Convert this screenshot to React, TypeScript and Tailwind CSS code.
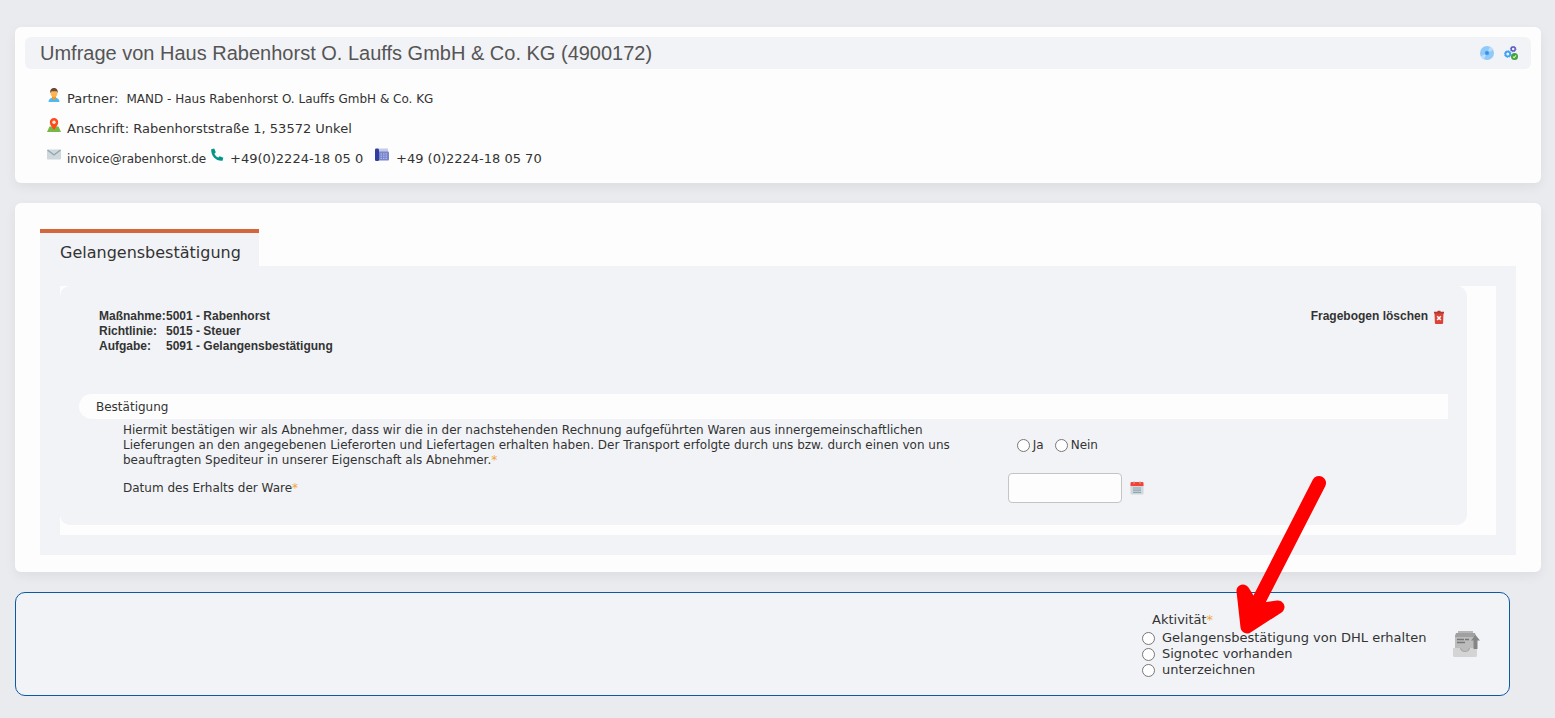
import React, { useState } from 'react';

const PersonIcon = () => (
    <svg viewBox="0 0 14 14" className="size-3.5 shrink-0">
        <path d="M1.500 14c0-3 2-4.500 5.500-4.500s5.500 1.500 5.500 4.500z" fill="#4fb8f5" />
        <path d="M5 8h4v2.500l-2 1.500-2-1.500z" fill="#f59b1c" />
        <ellipse cx="7" cy="5" rx="3.400" ry="4" fill="#ffb554" />
        <path d="M3.400 5C2.700 1.500 4.700 0 7 0s4.300 1.500 3.600 5L9.700 3.200H4.600z" fill="#6d4a35" />
    </svg>
)

const MapIcon = () => (
    <svg viewBox="0 0 14 14" className="size-3.5 shrink-0">
        <path d="M2.500 8.500h9L14 14H0z" fill="#75b843" />
        <path d="M7 12C5.500 9.500 2.800 7.500 2.800 4.300a4.200 4.200 0 0 1 8.400 0C11.200 7.500 8.500 9.500 7 12z" fill="#ff4a1c" />
        <circle cx="7" cy="4.300" r="1.700" fill="#ffe9e0" />
    </svg>
)

const MailIcon = () => (
    <svg viewBox="0 0 14 14" className="size-3.5 shrink-0">
        <rect y="1.500" width="14" height="10" rx="1" fill="#cfd8dc" />
        <path d="M0.500 2L7 7l6.500-5" fill="none" stroke="#90a4ae" strokeWidth="1.300" />
    </svg>
)

const PhoneIcon = () => (
    <svg viewBox="0 0 14 14" className="size-3.5 shrink-0">
        <path d="M1.200 1.200L4.200.5 5.800 4.300 4.400 5.700c.8 1.700 2 3 3.900 3.900l1.400-1.400L13.300 9.700l-.8 3C6 13.200.8 8 1.200 1.200z" fill="#009688" />
    </svg>
)

const FaxIcon = () => (
    <svg viewBox="0 0 14 14" className="size-3.5 shrink-0">
        <rect x="4" y="0.500" width="9" height="4" fill="#c5cae9" />
        <rect x="3" y="3.500" width="11" height="9" rx="1" fill="#7986cb" />
        <path d="M5.500 6h7M5.500 8.200h7M5.500 10.400h7" stroke="#b9c1ee" strokeDasharray="1.500 1" />
        <rect y="0.500" width="4" height="12.500" rx="1.200" fill="#303f9f" />
    </svg>
)

const DiscIcon = () => (
    <svg viewBox="0 0 14 14" className="size-3.5">
        <circle cx="7" cy="7" r="7" fill="#90caf9" />
        <path d="M7 7L.8 10.200A7 7 0 0 0 4 13.300zM7 7l6.200-3.200A7 7 0 0 0 10 .7z" fill="#bbdefb" />
        <circle cx="7" cy="7" r="2.300" fill="#4a9ff0" />
        <circle cx="7" cy="7" r="0.800" fill="#3578c8" />
    </svg>
)

const GearsIcon = () => (
    <svg viewBox="0 0 14 14" className="size-3.5">
        <circle cx="9.200" cy="3" r="2" fill="none" stroke="#5c5fc4" strokeWidth="1.500" />
        <circle cx="9.200" cy="3" r="2.800" fill="none" stroke="#5c5fc4" strokeWidth="0.800" strokeDasharray="1.200 1" />
        <circle cx="3.800" cy="8" r="2.400" fill="none" stroke="#3fa2f4" strokeWidth="1.800" />
        <circle cx="3.800" cy="8" r="3.400" fill="none" stroke="#3fa2f4" strokeWidth="0.900" strokeDasharray="1.400 1.200" />
        <circle cx="10.500" cy="10.500" r="3.500" fill="#43a047" />
        <path d="M8.900 10.600l1.200 1.100 2-2.300" fill="none" stroke="#ccff90" strokeWidth="1.100" />
    </svg>
)

const TrashIcon = () => (
    <svg viewBox="0 0 12 14" className="h-3.5 w-3">
        <path d="M1.500 3h9l-.4 10a1 1 0 0 1-1 1H2.900a1 1 0 0 1-1-1z" fill="#dc4338" />
        <path d="M1 1.800h3.200L4.800.7h2.400l.6 1.100H11v1.600H1z" fill="#b23a32" />
        <path d="M4.200 6.200l3.600 3.800M7.800 6.200L4.200 10" stroke="#fff" strokeWidth="1.500" />
    </svg>
)

const CalendarIcon = () => (
    <svg viewBox="0 0 14 14" className="size-3.5">
        <rect x="0.500" y="3" width="13" height="10.500" rx="1" fill="#cfd8dc" />
        <path d="M.5 5V2a1 1 0 0 1 1-1h11a1 1 0 0 1 1 1v3z" fill="#f44336" />
        <path d="M4 .5v2.300M10 .5v2.300" stroke="#b9a6a6" strokeWidth="1.300" />
        <path d="M3 7h8M3 9.200h8M3 11.400h8" stroke="#90a4ae" strokeWidth="1.200" />
    </svg>
)

const SubmitIcon = () => (
    <svg viewBox="0 0 28 28" className="size-7">
        <path d="M6 1h15v3H6z" fill="#b5b5b5" />
        <path d="M4 3h19l1 3v14H3V6z" fill="#a0a0a0" />
        <path d="M3 7h20v13H3z" fill="#bcbcbc" />
        <path d="M1 18h7.500c.5 2.500 2 3.500 4.500 3.500s4-1 4.500-3.500H25v7.500a1.500 1.500 0 0 1-1.500 1.500h-21A1.500 1.500 0 0 1 1 25.500z" fill="#d4d4d4" />
        <path d="M8.500 18h9c-.5 2.500-2 3.500-4.500 3.500s-4-1-4.500-3.500z" fill="#bcbcbc" />
        <path d="M8.500 18c.5 2.500 2 3.500 4.500 3.500s4-1 4.500-3.500" fill="none" stroke="#a8a8a8" strokeWidth="1.200" />
        <path d="M5 9.500h7M13 9.500h4M5 12.500h8" stroke="#777" strokeWidth="1.500" />
        <path d="M23.500 5l4.500 5.500h-2.500V19h-4v-8.500H19z" fill="#858585" />
    </svg>
)

const Arrow = () => (
    <svg viewBox="0 0 91 160" className="pointer-events-none absolute right-[182px] -top-[118px] h-40 w-[91px]" fill="none" stroke="#ff0000" strokeWidth="13" strokeLinecap="round" strokeLinejoin="round">
        <path d="M83 8L21 129" strokeWidth="14" />
        <path d="M7 116l4 36 31-20-23 3z" fill="#ff0000" />
    </svg>
)

const Star = () => <span className="text-[#f5a33c]">*</span>

const details = [
    { label: 'Maßnahme:', value: '5001 - Rabenhorst' },
    { label: 'Richtlinie:', value: '5015 - Steuer' },
    { label: 'Aufgabe:', value: '5091 - Gelangensbestätigung' },
]

const activities = ['Gelangensbestätigung von DHL erhalten', 'Signotec vorhanden', 'unterzeichnen']

const radioClass = "size-[13px] shrink-0"

const Header = () => {
    return (
        <header className="rounded-md bg-[#fdfdfd] px-2.5 pt-2.5 pb-2.5 shadow-[0_4px_12px_rgba(0,0,0,0.06)]">
            <div className="flex h-8 items-center justify-between rounded-md bg-[#f2f3f7] pr-[13px] pl-[15px]">
                <h1 className="font-['Liberation_Sans',sans-serif] text-[20px] text-[#555]">Umfrage von Haus Rabenhorst O. Lauffs GmbH &amp; Co. KG (4900172)</h1>
                <div className="flex gap-2.5">
                    <button type="button" aria-label="Datenträger"><DiscIcon /></button>
                    <button type="button" aria-label="Einstellungen"><GearsIcon /></button>
                </div>
            </div>
            <div className="mt-[15px] pl-[22px] text-[13px]">
                <div className="flex h-[30px] items-center">
                    <span className="mb-2"><PersonIcon /></span>
                    <span className="ml-1.5">Partner:</span>
                    <span className="ml-2 text-[12px]">MAND - Haus Rabenhorst O. Lauffs GmbH &amp; Co. KG</span>
                </div>
                <div className="flex h-[30px] items-center">
                    <span className="mb-2"><MapIcon /></span>
                    <span className="ml-1.5">Anschrift: Rabenhorststraße 1, 53572 Unkel</span>
                </div>
                <div className="flex h-[29px] items-center">
                    <span className="mb-2"><MailIcon /></span>
                    <a href="mailto:invoice@rabenhorst.de" className="ml-1.5 w-[138px] whitespace-nowrap text-[12px]">invoice@rabenhorst.de</a>
                    <span className="mb-2 ml-[5px]"><PhoneIcon /></span>
                    <span className="ml-1.5 w-[140px] whitespace-nowrap">+49(0)2224-18 05 0</span>
                    <span className="mb-2 ml-[5px]"><FaxIcon /></span>
                    <span className="ml-[7px]">+49 (0)2224-18 05 70</span>
                </div>
            </div>
        </header>
    )
}

const Questionnaire = () => {
    const [answer, setAnswer] = useState('')
    const [date, setDate] = useState('')

    return (
        <section className="mt-5 rounded-md bg-[#fdfdfd] px-[25px] pt-[26px] pb-[17px] shadow-[0_4px_12px_rgba(0,0,0,0.06)]">
            <button type="button" className="block h-[37px] border-t-4 border-[#d5653a] bg-[#f2f3f7] pt-1.5 pr-[18px] pl-5 text-[16px] leading-6">Gelangensbestätigung</button>
            <div className="bg-[#f2f3f7] p-5">
                <div className="bg-[#fdfdfd] pr-[29px] pb-2.5">
                    <div className="rounded-[10px] bg-[#f2f3f7] px-[19px] pt-[23px] pb-[22px]">
                        <div className="flex items-start justify-between pr-[3px] pl-5 font-['Liberation_Sans',sans-serif] text-[12px] leading-[15px] font-bold">
                            <dl>
                                {details.map((d) => (
                                    <div key={d.label} className="flex">
                                        <dt className="w-[67px]">{d.label}</dt>
                                        <dd>{d.value}</dd>
                                    </div>
                                ))}
                            </dl>
                            <button type="button" className="flex items-center gap-[5px]">Fragebogen löschen <TrashIcon /></button>
                        </div>
                        <h2 className="mt-10 flex h-[25px] items-center rounded-l-full bg-[#fdfdfd] pl-[17px] text-[12px]">Bestätigung</h2>
                        <div className="pt-1 pl-11 text-[12px] leading-[15px]">
                            <div className="flex items-center">
                                <p id="confirm" className="w-[67%]">
                                    Hiermit bestätigen wir als Abnehmer, dass wir die in der nachstehenden Rechnung aufgeführten Waren aus innergemeinschaftlichen<br />
                                    Lieferungen an den angegebenen Lieferorten und Liefertagen erhalten haben. Der Transport erfolgte durch uns bzw. durch einen von uns<br />
                                    beauftragten Spediteur in unserer Eigenschaft als Abnehmer.<Star />
                                </p>
                                <div role="radiogroup" aria-labelledby="confirm" className="flex gap-[11px] pl-[6px]">
                                    {['Ja', 'Nein'].map((o) => (
                                        <label key={o} className="flex items-center gap-[3px]">
                                            <input type="radio" name="confirm" checked={answer === o} onChange={() => setAnswer(o)} className={radioClass} />
                                            {o}
                                        </label>
                                    ))}
                                </div>
                            </div>
                            <div className="mt-[5px] flex items-center">
                                <label htmlFor="date" className="w-[67%]">Datum des Erhalts der Ware<Star /></label>
                                <input id="date" type="text" value={date} onChange={(e) => setDate(e.target.value)} className="h-[30px] w-[114px] -ml-[3px] rounded border border-[#c4c4c4] bg-[#fdfdfd] px-2 outline-none" />
                                <button type="button" aria-label="Kalender" className="ml-2"><CalendarIcon /></button>
                            </div>
                        </div>
                    </div>
                </div>
            </div>
        </section>
    )
}

const Activity = () => {
    const [activity, setActivity] = useState('')

    return (
        <footer className="relative mt-5 mr-[31px] flex h-[104px] items-center justify-end gap-5 rounded-[10px] border border-[#0a5aa5] bg-[#f2f3f7] pr-[29px]">
            <fieldset className="min-w-[290px] pt-0.5 text-[13px] leading-4">
                <legend className="pt-0.5 pl-2.5">Aktivität<Star /></legend>
                {activities.map((a) => (
                    <label key={a} className="flex items-center gap-[7px]">
                        <input type="radio" name="activity" checked={activity === a} onChange={() => setActivity(a)} className={radioClass} />
                        {a}
                    </label>
                ))}
            </fieldset>
            <button type="button" aria-label="Absenden"><SubmitIcon /></button>
            <Arrow />
        </footer>
    )
}

const App = () => {
    return (
        <main className="min-h-screen bg-[#eaebef] pt-[27px] pr-3.5 pb-[22px] pl-[15px] font-['DejaVu_Sans',sans-serif] text-[#333]">
            <Header />
            <Questionnaire />
            <Activity />
        </main>
    )
}

export default App
